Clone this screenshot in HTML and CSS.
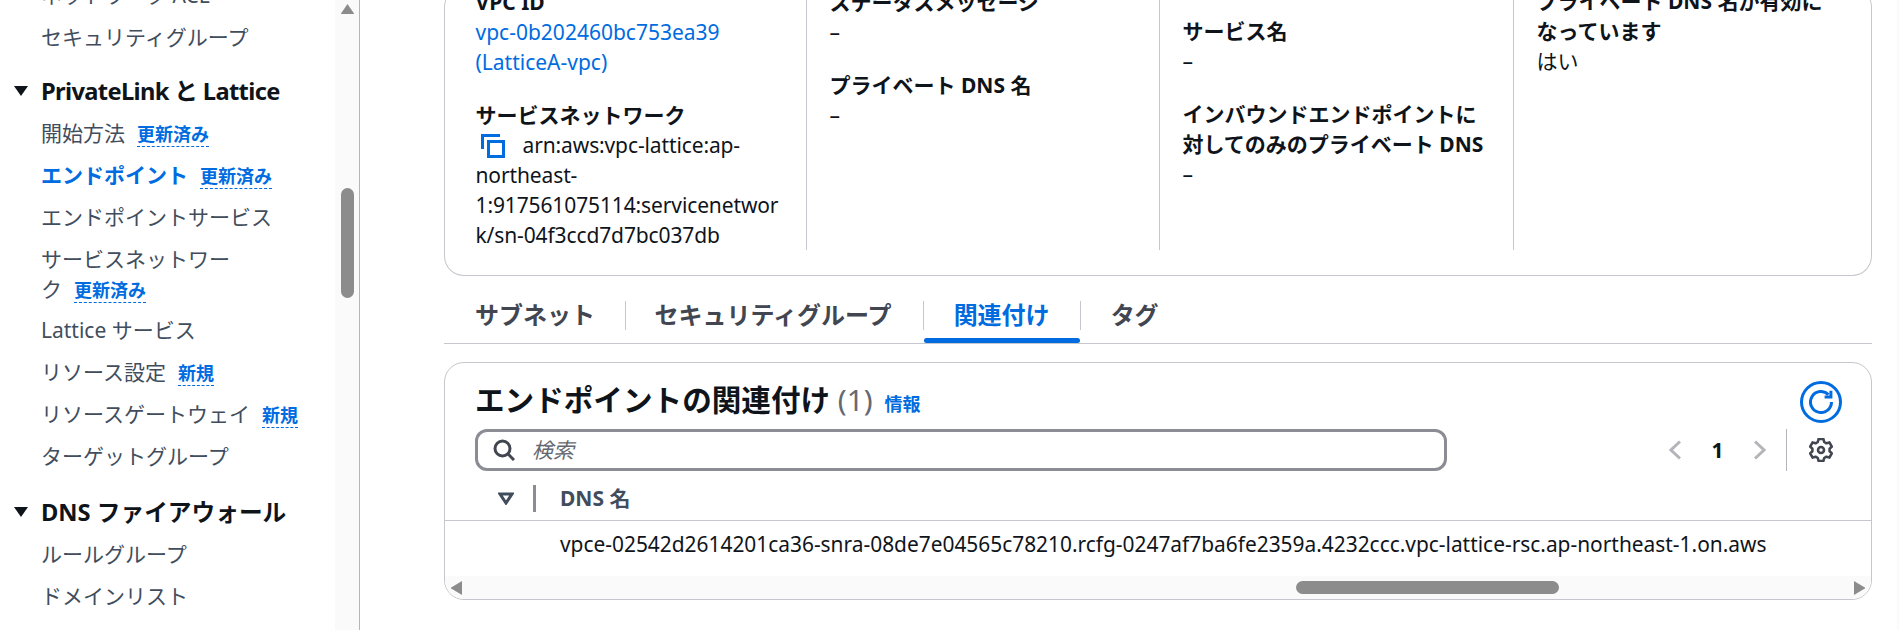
FILE: index.html
```html
<!DOCTYPE html>
<html lang="ja">
<head>
<meta charset="utf-8">
<title>エンドポイント</title>
<link rel="stylesheet" href="styles.css">
</head>
<body>
<div class="app">
  <aside class="side">
    <nav class="nav">
      <a class="item">ネットワーク ACL</a>
      <a class="item">セキュリティグループ</a>
      <div class="group">
        <div class="group-head tight"><svg class="caret" viewBox="0 0 16 12"><path d="M1 1h14L8 11z"/></svg>PrivateLink と Lattice</div>
        <a class="item">開始方法<span class="badge">更新済み</span></a>
        <a class="item active">エンドポイント<span class="badge">更新済み</span></a>
        <a class="item">エンドポイントサービス</a>
        <a class="item">サービスネットワー<br>ク<span class="badge">更新済み</span></a>
        <a class="item">Lattice サービス</a>
        <a class="item">リソース設定<span class="badge">新規</span></a>
        <a class="item">リソースゲートウェイ<span class="badge">新規</span></a>
        <a class="item">ターゲットグループ</a>
      </div>
      <div class="group">
        <div class="group-head"><svg class="caret" viewBox="0 0 16 12"><path d="M1 1h14L8 11z"/></svg>DNS ファイアウォール</div>
        <a class="item">ルールグループ</a>
        <a class="item">ドメインリスト</a>
      </div>
    </nav>
    <div class="side-scroll">
      <svg class="side-arrow" viewBox="0 0 15 12"><path d="M7.5 1 14 10.5a.5.5 0 0 1-.5.5h-12a.5.5 0 0 1-.5-.5z"/></svg>
      <div class="side-thumb"></div>
    </div>
  </aside>
  <main class="main">
    <section class="card details">
      <div class="col">
        <div class="field">
          <div class="label">VPC ID</div>
          <a class="link">vpc-0b202460bc753ea39 (LatticeA-vpc)</a>
        </div>
        <div class="field">
          <div class="label">サービスネットワーク</div>
          <div class="value breakable"><svg class="copy" viewBox="0 0 24 24"><path d="M1.5 15V1.5H19"/><rect x="7.5" y="7.5" width="15" height="15"/></svg>arn:aws:vpc-lattice:ap-northeast-1:917561075114:servicenetwork/sn-04f3ccd7d7bc037db</div>
        </div>
      </div>
      <div class="col divided">
        <div class="field">
          <div class="label">ステータスメッセージ</div>
          <div class="value">–</div>
        </div>
        <div class="field">
          <div class="label">プライベート DNS 名</div>
          <div class="value">–</div>
        </div>
      </div>
      <div class="col divided col-low">
        <div class="field">
          <div class="label">サービス名</div>
          <div class="value">–</div>
        </div>
        <div class="field">
          <div class="label">インバウンドエンドポイントに対してのみのプライベート DNS</div>
          <div class="value">–</div>
        </div>
      </div>
      <div class="col divided col-last">
        <div class="field">
          <div class="label">プライベート DNS 名が有効になっています</div>
          <div class="value">はい</div>
        </div>
      </div>
    </section>

    <div class="tabs">
      <a class="tab"><span class="tab-label first">サブネット</span></a>
      <a class="tab"><span class="tab-label wide">セキュリティグループ</span></a>
      <a class="tab current"><span class="tab-label">関連付け</span></a>
      <a class="tab"><span class="tab-label">タグ</span></a>
    </div>

    <section class="card assoc">
      <header class="assoc-head">
        <h2 class="title">エンドポイントの関連付け <span class="count">(1)</span><a class="info">情報</a></h2>
        <button class="refresh"><svg viewBox="0 0 16 16"><path d="M15 8a7 7 0 1 1-2-4.9"/><path d="M14.6 .5v4.2h-4.2"/></svg></button>
      </header>
      <div class="tools">
        <div class="search">
          <svg class="search-icon" viewBox="0 0 22 22"><circle cx="9.5" cy="9.5" r="7.5"/><path d="M15 15l6 6"/></svg>
          <span class="placeholder">検索</span>
        </div>
        <div class="pager">
          <svg class="chev" viewBox="0 0 12 20"><path d="M11 1.5 2 10l9 8.5"/></svg>
          <span class="page">1</span>
          <svg class="chev" viewBox="0 0 12 20"><path d="M1 1.5 10 10l-9 8.5"/></svg>
        </div>
        <div class="prefs">
          <svg class="gear" viewBox="0 0 24 24"><path d="M9.6 2h4.8l.8 3 2.2 1.3 3-.9 2.4 4.2-2.2 2.1v2.6l2.2 2.1-2.4 4.2-3-.9-2.2 1.3-.8 3H9.6l-.8-3-2.2-1.3-3 .9L1.2 16.4l2.2-2.1v-2.6L1.2 9.6l2.4-4.2 3 .9L8.8 5z" transform="translate(0 -1)"/><circle cx="12" cy="12" r="3"/></svg>
        </div>
      </div>
      <div class="thead">
        <svg class="filter" viewBox="0 0 16 13"><path d="M2 2h12L8 11z"/></svg>
        <span class="resizer"></span>
        <span class="th">DNS 名</span>
      </div>
      <div class="row">vpce-02542d2614201ca36-snra-08de7e04565c78210.rcfg-0247af7ba6fe2359a.4232ccc.vpc-lattice-rsc.ap-northeast-1.on.aws</div>
      <div class="hscroll">
        <svg class="h-arrow" viewBox="0 0 11 14"><path d="M11 0v14L1 8a1 1 0 0 1 0-2z"/></svg>
        <div class="h-thumb"></div>
        <svg class="h-arrow" viewBox="0 0 11 14"><path d="M0 0v14l10-6a1 1 0 0 0 0-2z"/></svg>
      </div>
    </section>
  </main>
</div>
</body>
</html>
```

FILE: styles.css
```css
* { box-sizing: border-box; }
html, body { margin: 0; height: 630px; overflow: hidden; background: #fff; }
body {
  font-family: "Noto Sans", "Noto Sans CJK JP", sans-serif;
  font-size: 21px;
  line-height: 30px;
  color: #0f141a;
}
.app { display: flex; height: 630px; border-right: 2px solid #fafafa; }

/* side navigation */
.side { flex: 0 0 360px; display: flex; border-right: 1px solid #b4b4bb; }
.nav { flex: 1; margin-top: -20px; padding-left: 41px; color: #414d5c; }
.item { display: block; margin-bottom: 11.9px; }
.item.active { color: #006ce0; font-weight: 700; }
.badge {
  display: inline-block;
  margin-left: 12px;
  font-size: 18px;
  line-height: 24px;
  font-weight: 700;
  color: #006ce0;
  border-bottom: 1px dashed #006ce0;
}
.group { margin-top: 24px; }
.group + .group { margin-top: 26px; }
.group-head {
  position: relative;
  margin-bottom: 12px;
  font-size: 23.7px;
  font-weight: 700;
  color: #0f141a;
}
.group-head.tight { letter-spacing: -0.65px; }
.caret { position: absolute; left: -28px; top: 9px; width: 16px; height: 12px; fill: #0f141a; }
.side-scroll { flex: 0 0 24px; background: #fafafa; padding: 3px 4px 0 5px; }
.side-arrow { display: block; width: 15px; height: 12px; fill: #8c8c8c; }
.side-thumb { width: 13px; height: 110px; margin: 173px 0 0 1px; border-radius: 7px; background: #8c8c8c; }

/* main column */
.main { flex: 1; min-width: 0; margin-top: -13px; padding: 0 25px 0 84px; }
.card { border: 1px solid #c6c6cd; border-radius: 20px; background: #fff; }
.details {
  display: grid;
  grid-template-columns: 330px 353px 354px 1fr;
  padding: 0 30px 25px 30.5px;
  border-top: 0;
}
.col { padding-right: 18px; }
.col.divided { border-left: 1px solid #c6c6cd; padding-left: 23px; padding-right: 24px; }
.col-low { padding-top: 29px; }
.col.col-last { padding-right: 0; }
.col-last .field { margin-top: -1px; }
.field { margin-bottom: 23px; }
.field:last-child { margin-bottom: 0; }
.label { font-weight: 700; }
.link { color: #006ce0; display: block; }
.breakable { overflow-wrap: anywhere; letter-spacing: -0.12px; }
.copy {
  width: 24px; height: 24px; margin: 0 18px 0 5px;
  vertical-align: -5px;
  fill: none; stroke: #006ce0; stroke-width: 3;
}

/* tabs */
.tabs { display: flex; margin-top: 25px; border-bottom: 1px solid #c6c6cd; }
.tab {
  position: relative;
  padding-bottom: 13px;
  font-size: 24px;
  font-weight: 700;
  color: #424650;
}
.tab-label { display: block; height: 29px; line-height: 27px; padding: 0 28.5px; border-left: 1px solid #c6c6cd; }
.tab-label.first { border-left: 0; padding: 0 30px 0 31px; }
.tab-label.wide { padding-right: 31px; }
.tab.current { color: #006ce0; }
.tab.current .tab-label { padding: 0 30px; }
.tab.current + .tab .tab-label { padding-left: 30px; }
.tab.current::after {
  content: "";
  position: absolute;
  left: 1px; right: 0; bottom: 0;
  height: 5px;
  border-radius: 3px;
  background: #006ce0;
}

/* associations card */
.assoc { margin-top: 18px; overflow: hidden; }
.assoc-head { display: flex; justify-content: space-between; align-items: center; height: 42px; margin-top: 18px; padding: 0 29px 0 30px; }
.title { margin: 0; font-size: 29.6px; line-height: 36px; font-weight: 700; }
.count { font-weight: 400; color: #656871; }
.info { margin-left: 12px; font-size: 18px; font-weight: 700; color: #006ce0; }
.refresh {
  width: 42px; height: 42px; padding: 6px;
  border: 3px solid #006ce0; border-radius: 50%;
  background: #fff;
}
.refresh svg { display: block; width: 24px; height: 24px; fill: none; stroke: #006ce0; stroke-width: 2; }
.tools { display: flex; align-items: center; margin-top: 6px; padding-left: 30px; height: 42px; }
.search {
  display: flex; align-items: center;
  width: 972px; height: 42px;
  padding-left: 15px;
  border: 3px solid #8c8c94;
  border-radius: 12px;
}
.search-icon { width: 22px; height: 22px; fill: none; stroke: #424650; stroke-width: 3; }
.placeholder { margin-left: 17px; font-style: italic; color: #656871; }
.pager { display: flex; align-items: center; margin-left: 222px; }
.chev { width: 12px; height: 20px; fill: none; stroke: #b4b4bb; stroke-width: 3; }
.page { width: 73px; text-align: center; font-weight: 700; }
.prefs { display: flex; align-items: center; margin-left: 20px; padding-left: 22px; height: 42px; border-left: 1px solid #b4b4bb; }
.gear { width: 24px; height: 24px; fill: none; stroke: #424650; stroke-width: 2.6; stroke-linejoin: round; }
.thead { display: flex; align-items: center; height: 50px; padding: 5px 0 0 53px; border-bottom: 1px solid #c6c6cd; }
.filter { width: 16px; height: 13px; fill: none; stroke: #414d5c; stroke-width: 3; }
.resizer { width: 3px; height: 27px; margin-left: 19px; background: #8c8c94; }
.th { margin-left: 24px; font-weight: 700; color: #414d5c; }
.row { height: 55px; padding: 8px 0 0 115px; font-size: 20.9px; white-space: nowrap; }
.hscroll { display: flex; align-items: center; height: 23px; padding: 0 6px; background: #fafafa; }
.h-arrow { flex: none; width: 11px; height: 14px; fill: #8c8c8c; }
.h-thumb { width: 263px; height: 13px; margin: 0 295px 0 834px; border-radius: 7px; background: #8c8c8c; }
```
